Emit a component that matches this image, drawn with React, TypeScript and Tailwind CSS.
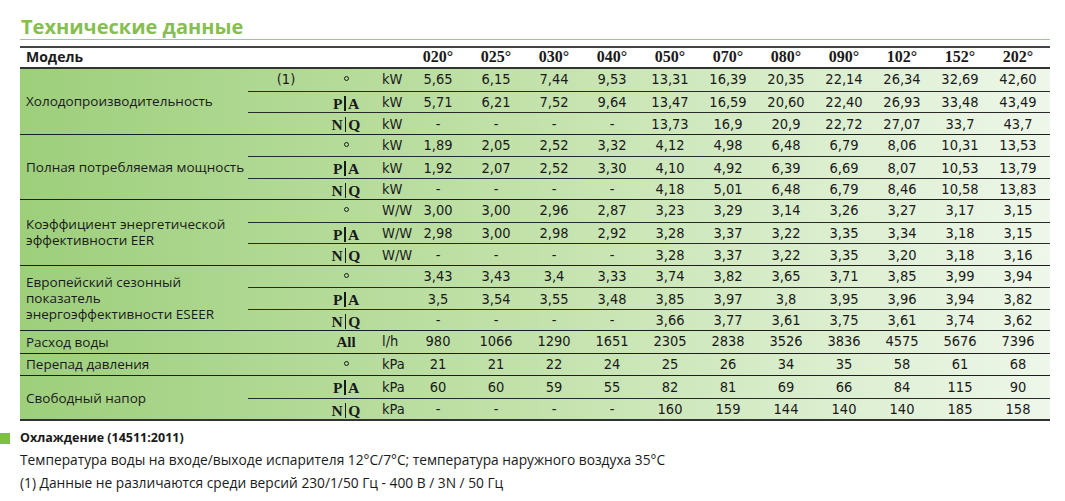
import React from "react";

type Row = { sub?: string; m: string; u: string; v: string[] };
type Group = { label: React.ReactNode; rows: Row[] };

const D = ["-", "-", "-", "-"];

const groups: Group[] = [
  {
    label: "Холодопроизводительность",
    rows: [
      { sub: "(1)", m: "°", u: "kW", v: ["5,65", "6,15", "7,44", "9,53", "13,31", "16,39", "20,35", "22,14", "26,34", "32,69", "42,60"] },
      { m: "P|A", u: "kW", v: ["5,71", "6,21", "7,52", "9,64", "13,47", "16,59", "20,60", "22,40", "26,93", "33,48", "43,49"] },
      { m: "N|Q", u: "kW", v: [...D, "13,73", "16,9", "20,9", "22,72", "27,07", "33,7", "43,7"] },
    ],
  },
  {
    label: "Полная потребляемая мощность",
    rows: [
      { m: "°", u: "kW", v: ["1,89", "2,05", "2,52", "3,32", "4,12", "4,98", "6,48", "6,79", "8,06", "10,31", "13,53"] },
      { m: "P|A", u: "kW", v: ["1,92", "2,07", "2,52", "3,30", "4,10", "4,92", "6,39", "6,69", "8,07", "10,53", "13,79"] },
      { m: "N|Q", u: "kW", v: [...D, "4,18", "5,01", "6,48", "6,79", "8,46", "10,58", "13,83"] },
    ],
  },
  {
    label: (
      <>
        Коэффициент энергетической
        <br />
        эффективности EER
      </>
    ),
    rows: [
      { m: "°", u: "W/W", v: ["3,00", "3,00", "2,96", "2,87", "3,23", "3,29", "3,14", "3,26", "3,27", "3,17", "3,15"] },
      { m: "P|A", u: "W/W", v: ["2,98", "3,00", "2,98", "2,92", "3,28", "3,37", "3,22", "3,35", "3,34", "3,18", "3,15"] },
      { m: "N|Q", u: "W/W", v: [...D, "3,28", "3,37", "3,22", "3,35", "3,20", "3,18", "3,16"] },
    ],
  },
  {
    label: (
      <>
        Европейский сезонный
        <br />
        показатель
        <br />
        энергоэффективности ESEER
      </>
    ),
    rows: [
      { m: "°", u: "", v: ["3,43", "3,43", "3,4", "3,33", "3,74", "3,82", "3,65", "3,71", "3,85", "3,99", "3,94"] },
      { m: "P|A", u: "", v: ["3,5", "3,54", "3,55", "3,48", "3,85", "3,97", "3,8", "3,95", "3,96", "3,94", "3,82"] },
      { m: "N|Q", u: "", v: [...D, "3,66", "3,77", "3,61", "3,75", "3,61", "3,74", "3,62"] },
    ],
  },
  {
    label: "Расход воды",
    rows: [{ m: "All", u: "l/h", v: ["980", "1066", "1290", "1651", "2305", "2838", "3526", "3836", "4575", "5676", "7396"] }],
  },
  {
    label: "Перепад давления",
    rows: [{ m: "°", u: "kPa", v: ["21", "21", "22", "24", "25", "26", "34", "35", "58", "61", "68"] }],
  },
  {
    label: "Свободный напор",
    rows: [
      { m: "P|A", u: "kPa", v: ["60", "60", "59", "55", "82", "81", "69", "66", "84", "115", "90"] },
      { m: "N|Q", u: "kPa", v: [...D, "160", "159", "144", "140", "140", "185", "158"] },
    ],
  },
];

const models = ["020°", "025°", "030°", "040°", "050°", "070°", "080°", "090°", "102°", "152°", "202°"];

const sans = "font-['Open_Sans','Noto_Sans',sans-serif]";
const num = "font-['DejaVu_Sans_Condensed','DejaVu_Sans',sans-serif] font-stretch-condensed";
const serif = "font-['Liberation_Serif','DejaVu_Serif',serif]";

function Marker({ m }: { m: string }) {
  if (m === "°") {
    return <span className="block w-[5px] h-[5px] rounded-full border-[1.5px] border-[#1a1a1a] relative top-[-1px]" />;
  }
  if (m === "All") {
    return <span className={`${serif} font-bold text-[15px]`}>All</span>;
  }
  const [a, b] = m.split("|");
  return (
    <span className={`${serif} font-bold text-[15.5px] flex items-center`}>
      {a}
      <span className="inline-block w-[1.5px] h-[15px] bg-[#1a1a1a] mx-[2px]" />
      {b}
    </span>
  );
}

export default function App() {
  return (
    <div className="w-[1065px] h-[501px] bg-white text-[#1a1a1a] overflow-hidden">
      <div className="pl-[20px] pr-[15px] pt-[14px]">
        <div
          className={`${sans} font-bold text-[20px] leading-[25px] text-[#86bf4f] border-b border-[#9cc88a] pl-[1px]`}
        >
          Технические данные
        </div>
        <div className="mt-[6px] border-t-2 border-[#444] border-b-2 border-b-[#333] h-[23px] grid grid-cols-[389px_repeat(11,58px)_1fr] items-center">
          <div className={`${sans} font-bold text-[14px] leading-[18px] pl-[6px] relative top-[-1px]`}>Модель</div>
          {models.map((m) => (
            <div key={m} className={`${serif} font-bold text-[16px] leading-[18px] text-center relative top-[-1px]`}>
              {m}
            </div>
          ))}
          <div />
        </div>
        <div className="bg-gradient-to-r from-[#9dcf7b] via-[#c3e2ab] to-[#eef7ea] border-b-2 border-[#333]">
          {groups.map((g, gi) => (
            <div key={gi} className={`flex ${gi > 0 ? "border-t border-[#1e1e1e]" : ""}`}>
              <div className={`${sans} w-[228px] shrink-0 flex items-center pl-[6px] text-[13.5px] leading-[16px]`}>
                <div>{g.label}</div>
              </div>
              <div className="flex-1">
                {g.rows.map((r, ri) => (
                  <div
                    key={ri}
                    className={`h-[21.5px] grid grid-cols-[72px_52px_37px_repeat(11,58px)_1fr] items-center ${
                      ri > 0 ? "border-t border-[#2a2a2a]" : ""
                    }`}
                  >
                    <div className={`${num} text-[14.5px] text-center pl-[4px]`}>{r.sub ?? ""}</div>
                    <div className="flex justify-center">
                      <Marker m={r.m} />
                    </div>
                    <div className={`${num} text-[14.5px] pl-[10px]`}>{r.u}</div>
                    {r.v.map((v, vi) => (
                      <div key={vi} className={`${num} text-[14.5px] text-center`}>
                        {v}
                      </div>
                    ))}
                    <div />
                  </div>
                ))}
              </div>
            </div>
          ))}
        </div>
      </div>
      <div className="mt-[9px] flex items-center">
        <div className="w-[10px] h-[11px] bg-[#7cc142]" />
        <div className={`${sans} font-bold text-[12.5px] ml-[10px] leading-[16px]`}>Охлаждение (14511:2011)</div>
      </div>
      <div className={`${sans} text-[13.75px] pl-[20px] leading-[23px] mt-[2px]`}>
        <div>Температура воды на входе/выходе испарителя 12°C/7°C; температура наружного воздуха 35°C</div>
        <div>(1) Данные не различаются среди версий 230/1/50 Гц - 400 В / 3N / 50 Гц</div>
      </div>
    </div>
  );
}
